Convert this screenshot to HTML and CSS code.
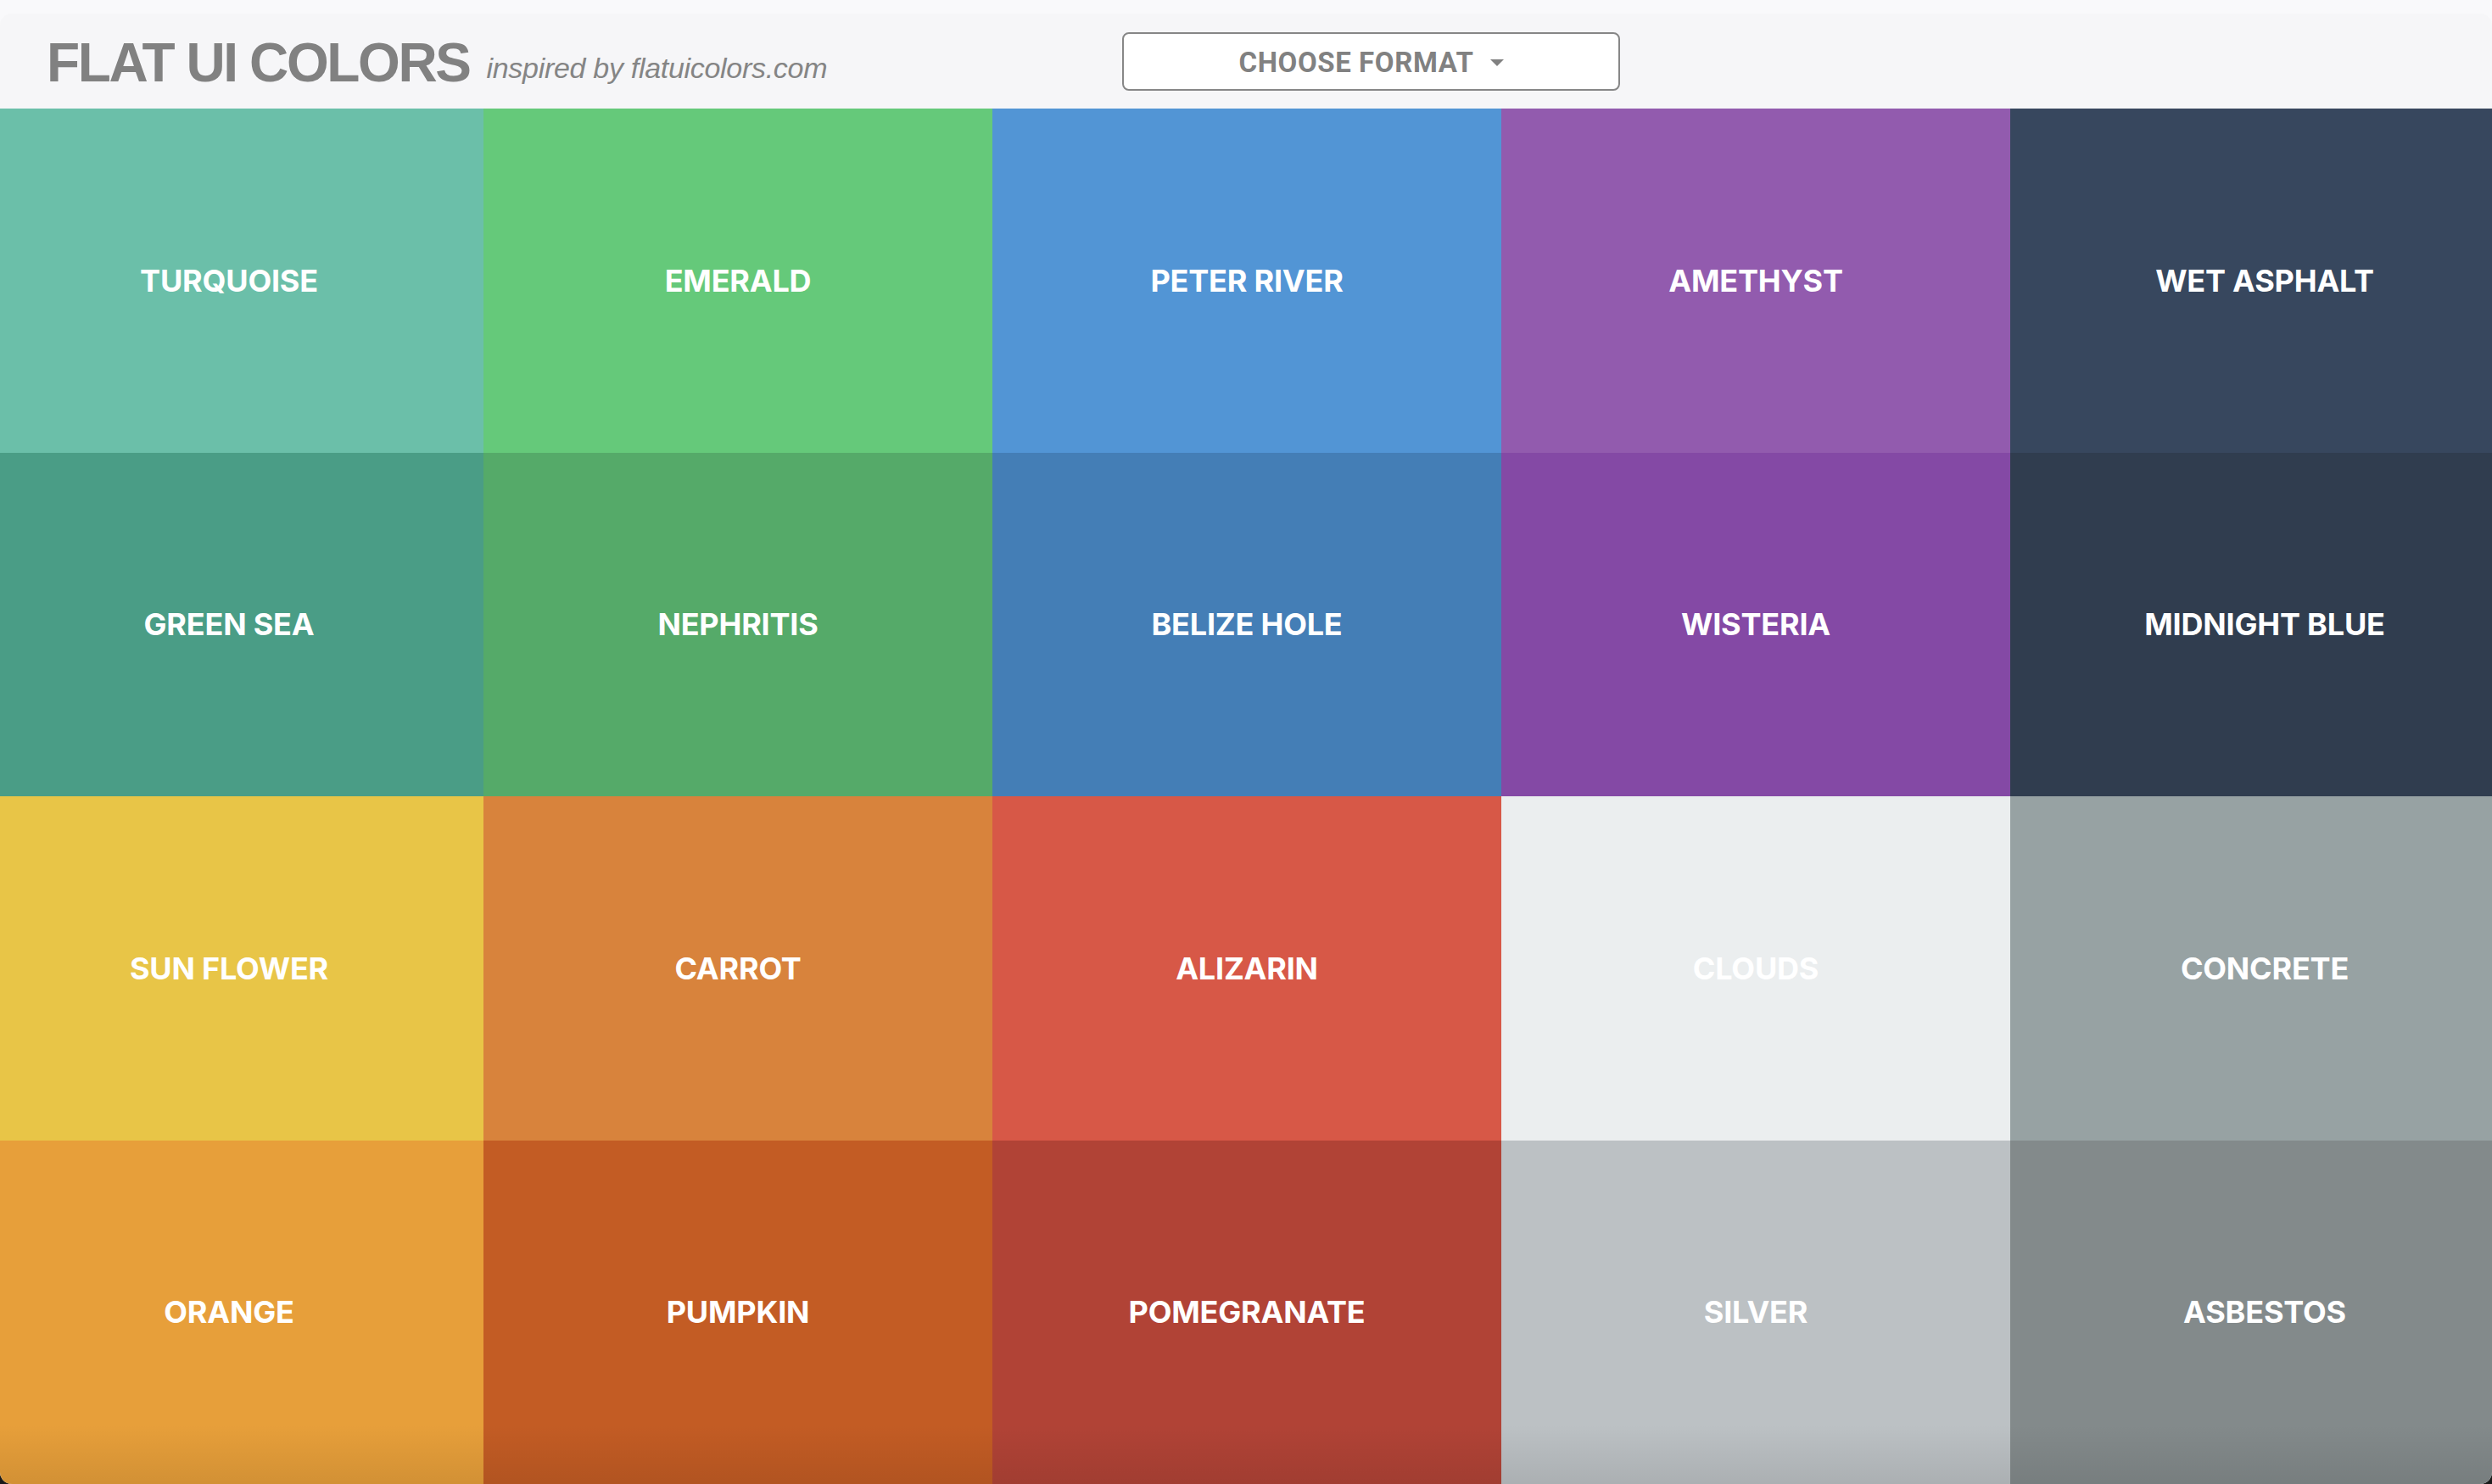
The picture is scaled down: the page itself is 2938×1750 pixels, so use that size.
FILE: index.html
```html
<!DOCTYPE html>
<html lang="en">
<head>
<meta charset="utf-8">
<title>Flat UI Colors</title>
<link rel="stylesheet" href="styles.css">
</head>
<body>
<div class="topstrip"></div>
<div class="app">
  <header class="header">
    <div class="brand">
      <h1 class="title">FLAT UI COLORS</h1>
      <span class="subtitle">inspired by flatuicolors.com</span>
    </div>
    <button class="format-btn" type="button">
      <span>CHOOSE FORMAT</span>
      <span class="caret"></span>
    </button>
  </header>
  <main class="grid-wrap">
    <div class="grid">
      <div class="tile turquoise">TURQUOISE</div>
      <div class="tile emerald">EMERALD</div>
      <div class="tile peter-river">PETER RIVER</div>
      <div class="tile amethyst">AMETHYST</div>
      <div class="tile wet-asphalt">WET ASPHALT</div>
      <div class="tile green-sea">GREEN SEA</div>
      <div class="tile nephritis">NEPHRITIS</div>
      <div class="tile belize-hole">BELIZE HOLE</div>
      <div class="tile wisteria">WISTERIA</div>
      <div class="tile midnight-blue">MIDNIGHT BLUE</div>
      <div class="tile sun-flower">SUN FLOWER</div>
      <div class="tile carrot">CARROT</div>
      <div class="tile alizarin">ALIZARIN</div>
      <div class="tile clouds">CLOUDS</div>
      <div class="tile concrete">CONCRETE</div>
      <div class="tile orange">ORANGE</div>
      <div class="tile pumpkin">PUMPKIN</div>
      <div class="tile pomegranate">POMEGRANATE</div>
      <div class="tile silver">SILVER</div>
      <div class="tile asbestos">ASBESTOS</div>
    </div>
    <div class="bottom-shade"></div>
  </main>
</div>
</body>
</html>
```

FILE: styles.css
```css
html {
  background: linear-gradient(#f9f9fb 50%, #1a1a1a 50%);
}
body {
  margin: 0;
  height: 1750px;
  display: flex;
  flex-direction: column;
  overflow: hidden;
}
.topstrip {
  height: 16px;
  flex: 0 0 16px;
  background: #f9f9fb;
}
.app {
  flex: 1;
  display: flex;
  flex-direction: column;
  border-radius: 14px;
  overflow: hidden;
  background: #f6f6f8;
}
.header {
  height: 112px;
  flex: 0 0 112px;
  display: flex;
  align-items: center;
  padding-left: 55px;
  box-sizing: border-box;
}
.brand {
  flex: 0 0 1268px;
  display: flex;
  align-items: baseline;
  padding-top: 4px;
}
.title {
  margin: 0;
  font-family: "Liberation Sans", Arial, sans-serif;
  font-weight: 700;
  font-size: 64px;
  line-height: 1;
  letter-spacing: -2.4px;
  color: #818181;
}
.subtitle {
  margin-left: 20px;
  font-family: "Liberation Sans", Arial, sans-serif;
  font-style: italic;
  font-size: 34px;
  color: #858585;
  letter-spacing: -0.3px;
  position: relative;
  top: -4px;
}
.format-btn {
  width: 587px;
  height: 69px;
  box-sizing: border-box;
  border: 2px solid #878787;
  border-radius: 8px;
  background: #ffffff;
  display: flex;
  align-items: center;
  justify-content: center;
  gap: 19px;
  font-family: Roboto, "Liberation Sans", sans-serif;
  font-weight: 700;
  font-size: 33px;
  color: #818181;
  letter-spacing: 0.6px;
  padding: 2px 0 0 0;
}
.caret {
  width: 0;
  height: 0;
  border-left: 8.5px solid transparent;
  border-right: 8.5px solid transparent;
  border-top: 8px solid #818181;
  margin-top: 2px;
}
.grid-wrap {
  flex: 1;
  position: relative;
  overflow: hidden;
}
.grid {
  margin-left: -30px;
  width: 3000px;
  height: 100%;
  display: grid;
  grid-template-columns: repeat(5, 600px);
  grid-template-rows: repeat(4, 1fr);
}
.tile {
  display: flex;
  align-items: center;
  justify-content: center;
  font-family: Inter, "Liberation Sans", sans-serif;
  font-weight: 700;
  font-size: 36px;
  color: #ffffff;
  letter-spacing: -0.2px;
}
.bottom-shade {
  position: absolute;
  left: 0;
  right: 0;
  bottom: 0;
  height: 70px;
  background: linear-gradient(rgba(0,0,0,0), rgba(0,0,0,0.09));
  pointer-events: none;
}
.turquoise { background: #6bbfa9; }
.emerald { background: #65c97a; }
.peter-river { background: #5295d5; }
.amethyst { background: #925bae; }
.wet-asphalt { background: #37475e; }
.green-sea { background: #4a9d86; }
.nephritis { background: #55aa69; }
.belize-hole { background: #447eb6; }
.wisteria { background: #8449a5; }
.midnight-blue { background: #303d4f; }
.sun-flower { background: #e8c547; }
.carrot { background: #d8833c; }
.alizarin { background: #d75847; }
.clouds { background: #ebeeef; }
.concrete { background: #97a2a3; }
.orange { background: #e79f3a; }
.pumpkin { background: #c35c24; }
.pomegranate { background: #b14336; }
.silver { background: #bcc1c4; }
.asbestos { background: #838a8b; }
```
